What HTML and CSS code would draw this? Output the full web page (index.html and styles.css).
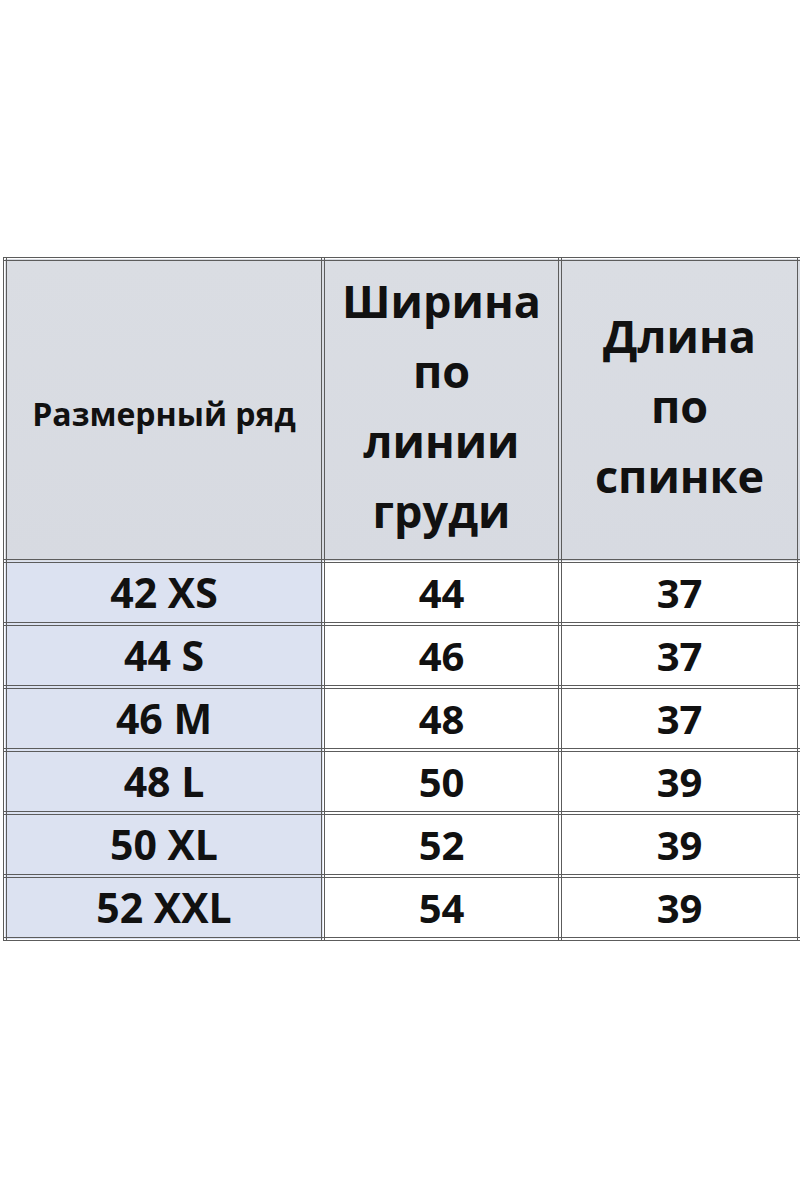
FILE: index.html
```html
<!DOCTYPE html>
<html lang="ru">
<head>
<meta charset="utf-8">
<title>Размерная сетка</title>
<link rel="stylesheet" href="styles.css">
</head>
<body>
<div class="frame">
  <table class="sizes">
    <colgroup>
      <col class="c1"><col class="c2"><col class="c3"><col class="c4">
    </colgroup>
    <thead>
      <tr class="head">
        <th class="label">Размерный ряд</th>
        <th class="big">Ширина<br>по<br>линии<br>груди</th>
        <th class="big">Длина<br>по<br>спинке</th>
        <th></th>
      </tr>
    </thead>
    <tbody>
      <tr><td class="size">42 XS</td><td>44</td><td>37</td><td></td></tr>
      <tr><td class="size">44 S</td><td>46</td><td>37</td><td></td></tr>
      <tr><td class="size">46 M</td><td>48</td><td>37</td><td></td></tr>
      <tr><td class="size">48 L</td><td>50</td><td>39</td><td></td></tr>
      <tr><td class="size">50 XL</td><td>52</td><td>39</td><td></td></tr>
      <tr><td class="size">52 XXL</td><td>54</td><td>39</td><td></td></tr>
    </tbody>
  </table>
</div>
</body>
</html>
```
FILE: styles.css
```css
html, body {
  margin: 0;
  padding: 0;
  background: #ffffff;
}
.frame {
  width: 800px;
  overflow: hidden;
  padding-top: 257px;
}
.sizes {
  margin-left: 3px;
  border-collapse: collapse;
  table-layout: fixed;
  width: 900px;
  background: #ffffff;
  font-family: "Open Sans", "Liberation Sans", sans-serif;
  font-weight: 700;
  color: #111111;
}
.c1 { width: 318px; }
.c2 { width: 237px; }
.c3 { width: 239px; }
.c4 { width: 106px; }
.sizes th, .sizes td {
  border: 4px double #5c5c5c;
  padding: 0;
  text-align: center;
  vertical-align: middle;
}
.head th {
  height: 290px;
  background: linear-gradient(#dadde3, #d7dae1);
  font-weight: 700;
}
.head .label {
  font-size: 32px;
  padding-top: 6px;
}
.head .big {
  font-size: 45px;
  line-height: 70px;
  padding-bottom: 8px;
}
.sizes td {
  height: 59px;
  font-size: 40px;
  line-height: 59px;
  background: #ffffff;
}
.sizes td.size {
  background: #dce2f1;
  font-size: 41px;
}
```
